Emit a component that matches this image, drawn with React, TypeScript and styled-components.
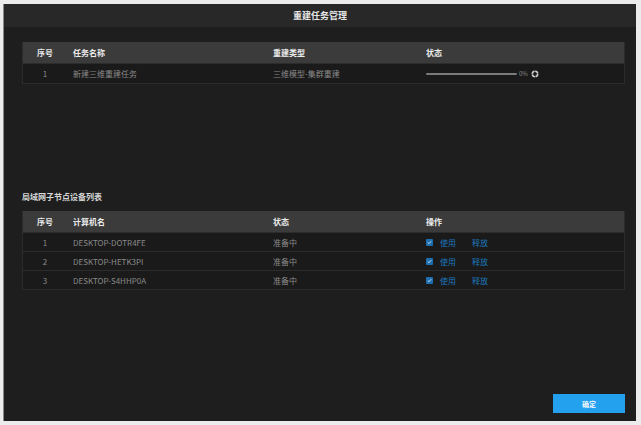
import React from "react";
import styled, { createGlobalStyle } from "styled-components";

const Global = createGlobalStyle`
  html, body { margin: 0; padding: 0; background: #ececec; }
  body { font-family: "Noto Sans CJK SC", "Noto Sans", "Liberation Sans", sans-serif; }
`;

const Page = styled.div`
  width: 641px;
  height: 425px;
  padding: 4px 5px 4px 3px;
  box-sizing: border-box;
`;

const Dialog = styled.div`
  width: 100%;
  height: 100%;
  background: #1e1e1e;
  border-left: 1px solid #8a8a8a;
  box-sizing: border-box;
  display: flex;
  flex-direction: column;
`;

const TitleBar = styled.div`
  height: 23px;
  flex: none;
  background: #282828;
  display: flex;
  align-items: center;
  justify-content: center;
  color: #e6e6e6;
  font-size: 9px;
  font-weight: 700;
`;

const Body = styled.div`
  flex: 1;
  display: flex;
  flex-direction: column;
  padding: 15px 11px 8px 18px;
`;

const Table = styled.div`
  display: flex;
  flex-direction: column;
  border: 1px solid #2b2b2b;
  border-top: none;
`;

const cols = "44px 200px 153px 1fr";

const HeadRow = styled.div`
  display: grid;
  grid-template-columns: ${cols};
  height: 21px;
  align-items: center;
  background: #3b3b3b;
  color: #ececec;
  font-size: 8px;
  font-weight: 700;
`;

const Row = styled.div<{ $h?: number }>`
  display: grid;
  grid-template-columns: ${cols};
  height: ${(p) => p.$h ?? 19}px;
  box-sizing: border-box;
  align-items: center;
  background: #1a1a1a;
  border-top: 1px solid #2c2c2c;
  color: #8a8a8a;
  font-size: 8px;
`;

const Cell = styled.div<{ $center?: boolean }>`
  padding-left: ${(p) => (p.$center ? "0" : "6px")};
  text-align: ${(p) => (p.$center ? "center" : "left")};
  display: flex;
  align-items: center;
  justify-content: ${(p) => (p.$center ? "center" : "flex-start")};
  white-space: nowrap;
`;

const Progress = styled.div`
  width: 91px;
  height: 2px;
  background: #7a7a7a;
  border-radius: 1px;
`;

const Percent = styled.span`
  font-size: 6px;
  color: #8a8a8a;
  margin-left: 2px;
`;

const SectionTitle = styled.div`
  margin-top: 107px;
  margin-bottom: 8px;
  color: #d8d8d8;
  font-size: 8px;
  font-weight: 700;
  height: 12px;
  line-height: 12px;
`;

const Check = styled.span`
  width: 7px;
  height: 7px;
  border-radius: 1px;
  background: #1f6fb0;
  display: inline-flex;
  align-items: center;
  justify-content: center;
  margin-right: 7px;
`;

const Link = styled.span<{ $gap?: number }>`
  color: #1c78bd;
  margin-right: ${(p) => p.$gap ?? 0}px;
`;

const Footer = styled.div`
  margin-top: auto;
  display: flex;
  justify-content: flex-end;
`;

const Button = styled.button`
  width: 72px;
  height: 19px;
  border: none;
  background: #23a0ee;
  color: #f4f8ff;
  font-family: inherit;
  font-size: 7px;
  font-weight: 700;
  padding: 0;
`;

const Spinner = () => (
  <svg width="8" height="8" viewBox="0 0 8 8" style={{ marginLeft: 3 }}>
    <circle cx="4" cy="4" r="2.7" fill="none" stroke="#d0d0d0" strokeWidth="1.6" strokeDasharray="3.6 0.6" />
  </svg>
);

const CheckMark = () => (
  <svg width="5" height="5" viewBox="0 0 5 5">
    <path d="M0.8 2.6 L2 3.7 L4.2 1.2" fill="none" stroke="#cfe3f5" strokeWidth="0.9" />
  </svg>
);

const devices = ["DESKTOP-DOTR4FE", "DESKTOP-HETK3PI", "DESKTOP-S4HHP0A"];

export default function App() {
  return (
    <>
      <Global />
      <Page>
        <Dialog>
          <TitleBar>重建任务管理</TitleBar>
          <Body>
            <Table>
              <HeadRow>
                <Cell $center>序号</Cell>
                <Cell>任务名称</Cell>
                <Cell>重建类型</Cell>
                <Cell>状态</Cell>
              </HeadRow>
              <Row $h={20}>
                <Cell $center>1</Cell>
                <Cell>新建三维重建任务</Cell>
                <Cell>三维模型-集群重建</Cell>
                <Cell>
                  <Progress />
                  <Percent>0%</Percent>
                  <Spinner />
                </Cell>
              </Row>
            </Table>
            <SectionTitle>局域网子节点设备列表</SectionTitle>
            <Table>
              <HeadRow>
                <Cell $center>序号</Cell>
                <Cell>计算机名</Cell>
                <Cell>状态</Cell>
                <Cell>操作</Cell>
              </HeadRow>
              {devices.map((d, i) => (
                <Row key={d}>
                  <Cell $center>{i + 1}</Cell>
                  <Cell>{d}</Cell>
                  <Cell>准备中</Cell>
                  <Cell>
                    <Check>
                      <CheckMark />
                    </Check>
                    <Link $gap={16}>使用</Link>
                    <Link>释放</Link>
                  </Cell>
                </Row>
              ))}
            </Table>
            <Footer>
              <Button>确定</Button>
            </Footer>
          </Body>
        </Dialog>
      </Page>
    </>
  );
}
